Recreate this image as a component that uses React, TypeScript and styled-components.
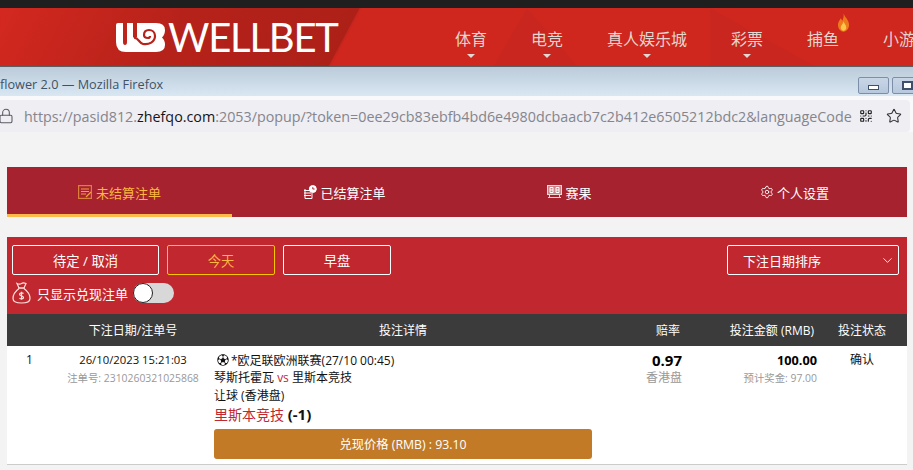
import styled, { createGlobalStyle } from "styled-components";
import { ChevronDown, Lock, QrCode, Settings, Star } from "lucide-react";
import { IoIosFootball } from "react-icons/io";

const GlobalStyle = createGlobalStyle`
  html, body {
    margin: 0;
    padding: 0;
    height: 100%;
    overflow: hidden;
    background: #f3f3f3;
  }
  * { box-sizing: border-box; }
  body {
    font-family: "Open Sans", "Noto Sans CJK SC", sans-serif;
  }
`;

const TopStrip = styled.div`
  height: 8px;
  background: #1f1f1f;
`;

const SiteHeader = styled.header`
  height: 59px;
  display: flex;
  align-items: center;
  padding-left: 116px;
  overflow: hidden;
  border-bottom: 1px solid #5c5f62;
  background:
    conic-gradient(at 527px 0, transparent 139deg, #c8261f 139deg 210deg, transparent 210deg),
    conic-gradient(at 710px 0, transparent 119deg, #c9261f 119deg 180deg, transparent 180deg),
    linear-gradient(118deg, #d3281f 0, #b5221a 170px, #ad2018 317px, #c4251d 318px, transparent 320px),
    #cf261e;
`;

const Logo = styled.div`
  display: flex;
  align-items: center;
  width: 339px;
  flex-shrink: 0;
`;

const LogoText = styled.span`
  font-family: "Lato", sans-serif;
  font-size: 40px;
  font-weight: 400;
  line-height: 40px;
  color: #fff;
  letter-spacing: -1.2px;
  margin-left: 3px;
`;

const Nav = styled.nav`
  display: flex;
  gap: 44px;
  white-space: nowrap;
`;

const NavItem = styled.a`
  position: relative;
  display: flex;
  flex-direction: column;
  align-items: center;
  font-size: 16px;
  line-height: 22px;
  padding-top: 11px;
  color: #e4d6d0;
`;

const Caret = styled.i<{ $hidden?: boolean }>`
  margin-top: 4px;
  width: 0;
  height: 0;
  border-left: 4px solid transparent;
  border-right: 4px solid transparent;
  border-top: 4px solid ${(p) => (p.$hidden ? "transparent" : "#e0d8d4")};
`;

const Flame = styled.svg`
  position: absolute;
  left: 30px;
  top: -4px;
`;

const TitleBar = styled.div`
  height: 29px;
  display: flex;
  justify-content: space-between;
  overflow: hidden;
  background: linear-gradient(#bccbd9, #d9e7f3);
`;

const TitleText = styled.span`
  font-size: 12.7px;
  line-height: 35px;
  color: #3f5266;
  white-space: nowrap;
`;

const WindowButtons = styled.div`
  display: flex;
  gap: 3px;
  padding-top: 10px;
  margin-right: -10px;
`;

const WindowButton = styled.div`
  width: 31px;
  height: 17px;
  display: flex;
  align-items: center;
  justify-content: center;
  border: 1px solid #7d8fa8;
  border-radius: 2px;
  background: linear-gradient(#c8d6e6, #b7c8dd);
`;

const MinGlyph = styled.i`
  width: 11px;
  height: 5px;
  margin-top: 3px;
  border: 1px solid #40506a;
  background: #fff;
`;

const MaxGlyph = styled.i`
  width: 11px;
  height: 9px;
  border: 2px solid #40506a;
  background: #fff;
`;

const AddressRow = styled.div`
  height: 36px;
  padding: 4px 3px 0 0;
  background: #f9f9fb;
`;

const AddressBar = styled.div`
  height: 32px;
  display: flex;
  align-items: center;
  padding-right: 8px;
  border-radius: 0 4px 4px 0;
  background: #eeeef3;
  color: #5b5b66;
`;

const LockIcon = styled(Lock)`
  margin-left: -2px;
  flex-shrink: 0;
`;

const Url = styled.div`
  margin-left: 10px;
  flex: 1;
  font-size: 14.32px;
  white-space: nowrap;
  overflow: hidden;
  color: #85858d;

  b {
    font-weight: 400;
    color: #15141a;
  }
`;

const AddressIcons = styled.div`
  display: flex;
  align-items: center;
  gap: 13px;
`;

const Page = styled.main`
  padding: 35px 6px 0 7px;
`;

const Tabs = styled.div`
  height: 50px;
  display: grid;
  grid-template-columns: repeat(4, 1fr);
  background: #a6222f;
`;

const Tab = styled.div<{ $active?: boolean }>`
  display: flex;
  align-items: center;
  justify-content: center;
  gap: 3px;
  padding-top: 3px;
  font-size: 13px;
  color: ${(p) => (p.$active ? "#fdb63f" : "#fff")};
  border-bottom: 3px solid ${(p) => (p.$active ? "#fdb94a" : "transparent")};
`;

const FilterPanel = styled.section`
  margin-top: 20px;
  height: 77px;
  padding: 8px 8px 0 5px;
  background: #c1272f;
`;

const FilterRow = styled.div`
  display: flex;
  gap: 8px;
`;

const FilterButton = styled.button<{ $width: number; $active?: boolean }>`
  width: ${(p) => p.$width}px;
  height: 30px;
  padding: 0;
  border: 1px solid ${(p) => (p.$active ? "#f7c600" : "#fff")};
  border-radius: 2px;
  background: transparent;
  font-family: inherit;
  font-size: 13.3px;
  color: ${(p) => (p.$active ? "#fdb63f" : "#fff")};
`;

const SortSelect = styled.div`
  margin-left: auto;
  width: 172px;
  height: 30px;
  display: flex;
  align-items: center;
  justify-content: space-between;
  padding: 0 3px 0 15px;
  border: 1px solid #fff;
  border-radius: 2px;
  font-size: 13px;
  color: #fff;
`;

const CashoutFilter = styled.div`
  display: flex;
  align-items: center;
  margin-top: 7px;
  font-size: 13px;
  color: #fff;
`;

const CashoutLabel = styled.span`
  margin: 0 5px 0 6px;
`;

const Toggle = styled.div`
  width: 41px;
  height: 20px;
  border-radius: 10px;
  background: #d8d8d8;
`;

const Knob = styled.div`
  width: 20px;
  height: 20px;
  border-radius: 50%;
  border: 1px solid #222;
  background: #fff;
`;

const columns = "45px 162px 378px 90px 135px 90px";

const TableHead = styled.div`
  height: 32px;
  display: grid;
  grid-template-columns: ${columns};
  align-items: center;
  background: #3b3b3b;
  font-size: 12px;
  color: #fff;
`;

const HeadCell = styled.div<{ $align?: string; $pad?: number }>`
  text-align: ${(p) => p.$align || "center"};
  padding-right: ${(p) => p.$pad || 0}px;
`;

const TableRow = styled.div`
  height: 119px;
  display: grid;
  grid-template-columns: ${columns};
  padding-top: 5px;
  background: #fff;
  border-bottom: 1px solid #ccc;
  font-size: 12px;
  color: #111;
`;

const Index = styled.div`
  padding-left: 19px;
  line-height: 18px;
`;

const DateCell = styled.div`
  text-align: center;
  line-height: 18px;
  font-size: 11.3px;
`;

const Muted = styled.div<{ $size?: number }>`
  font-size: ${(p) => p.$size || 10.4}px;
  line-height: 18px;
  color: #999;
`;

const League = styled.div`
  display: flex;
  align-items: center;
  gap: 1px;
  padding-left: 2px;
  height: 18px;
`;

const DetailLine = styled.div`
  line-height: 18px;
  white-space: nowrap;
`;

const Versus = styled.span`
  color: #c1272f;
`;

const Pick = styled.div`
  font-size: 14px;
  line-height: 19px;
  color: #c1272f;

  b {
    font-size: 15px;
    color: #111;
  }
`;

const CashoutButton = styled.button`
  display: block;
  width: 378px;
  height: 30px;
  margin-top: 5px;
  border: 0;
  border-radius: 3px;
  background: #c27a26;
  font-family: inherit;
  font-size: 12.3px;
  color: #fff;
`;

const OddsCell = styled.div`
  text-align: right;
`;

const Odds = styled.div`
  font-size: 15px;
  font-weight: 700;
  line-height: 18px;
  color: #000;
`;

const Amount = styled.div`
  font-size: 12.7px;
  font-weight: 700;
  line-height: 18px;
  color: #000;
`;

const StatusCell = styled.div`
  text-align: center;
  line-height: 18px;
`;

const navItems = ["体育", "电竞", "真人娱乐城", "彩票"];

function LogoMark() {
  return (
    <svg width="49" height="29" viewBox="0 0 49 29">
      <path
        d="M0 2Q0 0 2 0H7V19Q7 22 9 22 11 22 11 19V0H17V14Q19 16 21 14V0H40Q49 0 49 7 49 12 46 14.500 49 17 49 22 49 29 40 29H10Q0 29 0 19Z"
        fill="#fff"
      />
      <path
        d="M18 15c4-1 5 5 9 6 6 1 12-2 12-8 0-4-3-6-6-6-3 0-5 2-5 5 0 2 2 3 4 3 1 0 2-1 2-2"
        fill="none"
        stroke="#b8221b"
        strokeWidth="2.2"
      />
    </svg>
  );
}

function MoneyBag() {
  return (
    <svg width="19" height="22" viewBox="0 0 19 22" fill="none" stroke="#fbe3df" strokeWidth="1.2">
      <path d="M5 1.500c2 1 3 1 4.500 0s3-.6 4.500 0l-2 4.500H7Z" />
      <path d="M6.500 6h6M7 6.500C3 9.500 1 13 1 16.500 1 20 3.500 21 9.500 21s8.500-1 8.500-4.500c0-3.500-2-7-6-10" />
      <path d="M11.500 11.500c-1-1-4-1-4 .8 0 2 4 1.200 4 3.200 0 1.800-3 1.800-4 .7M9.500 9.800v8" />
    </svg>
  );
}

function NotePad() {
  return (
    <svg width="15" height="14" viewBox="0 0 15 14" fill="none" stroke="#dd7f3c" strokeWidth="1.2">
      <rect x=".6" y=".6" width="12.800" height="12.800" />
      <path d="M3 4h8M3 6.500h8M3 9h5M8 12l5-5" stroke="#f2a03f" />
    </svg>
  );
}

function ClockNote() {
  return (
    <svg width="14" height="14" viewBox="0 0 14 14" fill="none" stroke="#fff" strokeWidth="1">
      <path d="M1 5.500h7M1 8h7M1 10.500h7M2 4v9.500h7V8" />
      <circle cx="9.800" cy="4" r="3.500" fill="#fff" />
      <path d="M9.800 2.200V4h1.800" stroke="#a6222f" />
    </svg>
  );
}

function ResultBoard() {
  return (
    <svg width="15" height="14" viewBox="0 0 15 14" fill="none" stroke="#f2d7d0" strokeWidth="1">
      <rect x=".5" y=".5" width="14" height="9" fill="#c9858a" />
      <path d="M3 2.500h3v5H3ZM9 2.500h3v5H9ZM3 5h3M9 5h3" stroke="#fff" />
      <path d="M1 12.500h13M2.500 10v3M12.500 10v3" />
    </svg>
  );
}

export default function App() {
  return (
    <>
      <GlobalStyle />
      <TopStrip />
      <SiteHeader>
        <Logo>
          <LogoMark />
          <LogoText>WELLBET</LogoText>
        </Logo>
        <Nav>
          {navItems.map((n) => (
            <NavItem key={n}>
              {n}
              <Caret />
            </NavItem>
          ))}
          <NavItem>
            捕鱼
            <Caret $hidden />
            <Flame width="13" height="19" viewBox="0 0 14 20">
              <path d="M7 0c1 4 6 7 6 12.500C13 17 10 20 7 20s-6-3-6-7.500c0-3 2-4.500 3-7 1 1 1.500 2 1.500 3C7 6 7.500 3 7 0Z" fill="#ec7a1c" />
              <path d="M7 9c.5 2 3 3.500 3 6.500 0 2-1.500 3.500-3 3.500s-3-1.500-3-3.500c0-2.500 2.500-3.500 3-6.500Z" fill="#fdc64a" />
            </Flame>
          </NavItem>
          <NavItem>
            小游戏
            <Caret $hidden />
          </NavItem>
        </Nav>
      </SiteHeader>
      <TitleBar>
        <TitleText>flower 2.0 — Mozilla Firefox</TitleText>
        <WindowButtons>
          <WindowButton>
            <MinGlyph />
          </WindowButton>
          <WindowButton>
            <MaxGlyph />
          </WindowButton>
        </WindowButtons>
      </TitleBar>
      <AddressRow>
        <AddressBar>
          <LockIcon size={16} strokeWidth={1.6} />
          <Url>
            https://pasid812.<b>zhefqo.com</b>:2053/popup/?token=0ee29cb83ebfb4bd6e4980dcbaacb7c2b412e6505212bdc2&amp;languageCode
          </Url>
          <AddressIcons>
            <QrCode size={14} color="#222" />
            <Star size={16} strokeWidth={1.6} color="#333" />
          </AddressIcons>
        </AddressBar>
      </AddressRow>
      <Page>
        <Tabs>
          <Tab $active>
            <NotePad />
            未结算注单
          </Tab>
          <Tab>
            <ClockNote />
            已结算注单
          </Tab>
          <Tab>
            <ResultBoard />
            赛果
          </Tab>
          <Tab>
            <Settings size={14} strokeWidth={1.5} />
            个人设置
          </Tab>
        </Tabs>
        <FilterPanel>
          <FilterRow>
            <FilterButton $width={147}>待定 / 取消</FilterButton>
            <FilterButton $width={108} $active>今天</FilterButton>
            <FilterButton $width={108}>早盘</FilterButton>
            <SortSelect>
              下注日期排序
              <ChevronDown size={15} strokeWidth={1.4} />
            </SortSelect>
          </FilterRow>
          <CashoutFilter>
            <MoneyBag />
            <CashoutLabel>只显示兑现注单</CashoutLabel>
            <Toggle>
              <Knob />
            </Toggle>
          </CashoutFilter>
        </FilterPanel>
        <TableHead>
          <div />
          <HeadCell>下注日期/注单号</HeadCell>
          <HeadCell>投注详情</HeadCell>
          <HeadCell $align="right" $pad={2}>赔率</HeadCell>
          <HeadCell $align="right" $pad={3}>投注金额 (RMB)</HeadCell>
          <HeadCell>投注状态</HeadCell>
        </TableHead>
        <TableRow>
          <Index>1</Index>
          <DateCell>
            26/10/2023 15:21:03
            <Muted>注单号: 2310260321025868</Muted>
          </DateCell>
          <div>
            <League>
              <IoIosFootball size={14} />
              *欧足联欧洲联赛(27/10 00:45)
            </League>
            <DetailLine>
              琴斯托霍瓦 <Versus>vs</Versus> 里斯本竞技
            </DetailLine>
            <DetailLine>让球 (香港盘)</DetailLine>
            <Pick>
              里斯本竞技 <b>(-1)</b>
            </Pick>
            <CashoutButton>兑现价格 (RMB) : 93.10</CashoutButton>
          </div>
          <OddsCell>
            <Odds>0.97</Odds>
            <Muted $size={12}>香港盘</Muted>
          </OddsCell>
          <OddsCell>
            <Amount>100.00</Amount>
            <Muted>预计奖金: 97.00</Muted>
          </OddsCell>
          <StatusCell>确认</StatusCell>
        </TableRow>
      </Page>
    </>
  );
}
